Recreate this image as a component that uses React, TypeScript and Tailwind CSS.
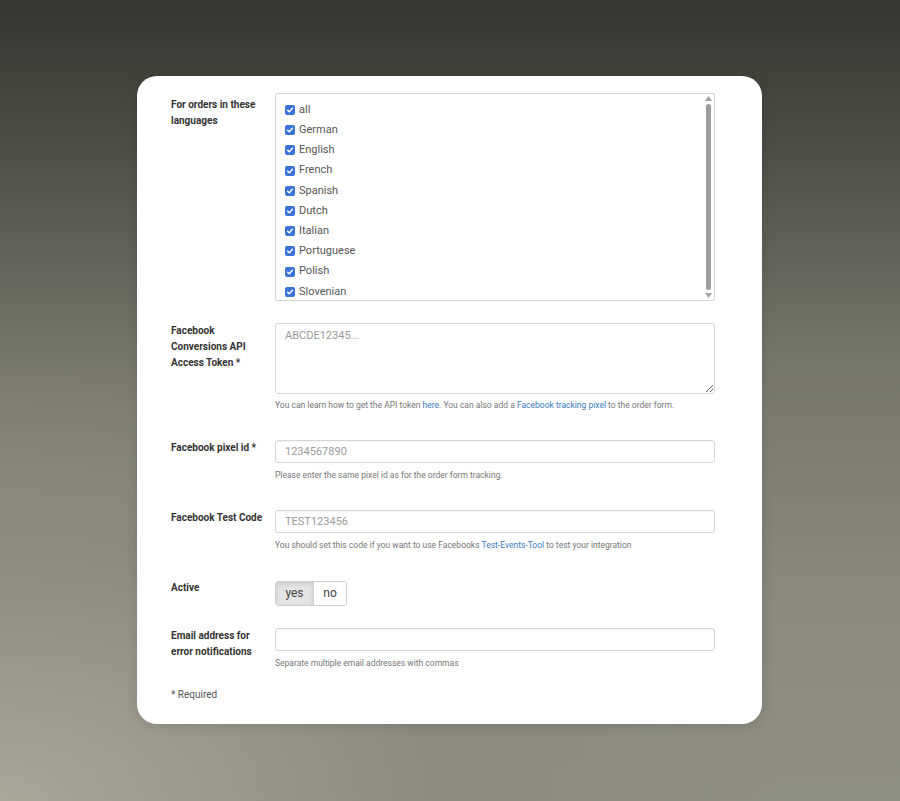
import type { ReactNode } from 'react'

const LANGUAGES = ['all', 'German', 'English', 'French', 'Spanish', 'Dutch', 'Italian', 'Portuguese', 'Polish', 'Slovenian']

function Check() {
  return (
    <span className="w-[10px] h-[10px] rounded-[2px] bg-[#3b74d9] flex items-center justify-center shrink-0">
      <svg className="w-[8px] h-[8px]" viewBox="0 0 10 10" fill="none" stroke="white" strokeWidth={1.8} strokeLinecap="round" strokeLinejoin="round">
        <path d="M2 5.2 4.1 7.3 8 2.8" />
      </svg>
    </span>
  )
}

function Row({ label, children, className = '', labelClass = '' }: { label: ReactNode; children: ReactNode; className?: string; labelClass?: string }) {
  return (
    <div className={`flex ${className}`}>
      <div className={`w-[104px] shrink-0 pr-2 text-[10px] font-bold leading-[16px] text-[#333] ${labelClass}`}>{label}</div>
      <div className="flex-1 min-w-0">{children}</div>
    </div>
  )
}

function Help({ children, className = 'mt-[5px]' }: { children: ReactNode; className?: string }) {
  return <p className={`${className} text-[8.5px] leading-[14px] text-[#777]`}>{children}</p>
}

const inputCls = 'block w-full h-[23px] border border-[#d6d6d6] rounded-[3px] px-[9px] text-[11px] text-[#555] placeholder:text-[#9a9a9a] outline-none shadow-[inset_0_1px_1px_rgba(0,0,0,0.04)]'

export default function App() {
  return (
    <div
      className="min-h-[801px] w-full flex pl-[137px] pt-[76px] bg-[radial-gradient(ellipse_110%_70%_at_0%_100%,#a8a697_0%,#8b8a7d_45%,transparent_80%),linear-gradient(180deg,#35342f_0%,#4e4d45_18%,#77766a_45%,#8a897c_75%,#8f8e82_100%)]"
      style={{ fontFamily: 'Roboto, "Liberation Sans", sans-serif' }}
    >
      <div className="w-[625px] h-[648px] bg-white rounded-[20px] pt-[17px] pl-[34px] pr-[47px] shadow-[0_2px_12px_rgba(0,0,0,0.12)]">
        <Row label="For orders in these languages" labelClass="pt-[4px]" className="mb-[22px]">
          <div className="flex h-[208px] border border-[#d4d4d4] rounded-[2px] overflow-hidden">
            <ul className="flex-1 pt-[6px] pl-[9px]">
              {LANGUAGES.map((l) => (
                <li key={l} className="h-[20.2px] flex items-center gap-[4px] text-[11px] text-[#555]">
                  <Check />
                  <span>{l}</span>
                </li>
              ))}
            </ul>
            <div className="w-[10px] mr-[1px] flex flex-col items-center pt-[2px] pb-[2px]">
              <svg className="w-[7px] h-[5px] shrink-0" viewBox="0 0 7 5"><path d="M3.5 0 7 5H0z" fill="#a3a3a3" /></svg>
              <div className="flex-1 w-[5px] rounded-full bg-[#9c9c9c] my-[3px]" />
              <svg className="w-[7px] h-[5px] shrink-0" viewBox="0 0 7 5"><path d="M0 0h7L3.5 5z" fill="#a3a3a3" /></svg>
            </div>
          </div>
        </Row>

        <Row label={<>Facebook<br />Conversions API<br />Access Token *</>} className="mb-[28px]">
          <textarea
            className="block w-full h-[71px] border border-[#d6d6d6] rounded-[3px] px-[9px] py-[5px] text-[11px] leading-[14px] text-[#555] placeholder:text-[#9a9a9a] outline-none"
            placeholder="ABCDE12345..."
          />
          <Help className="mt-[4px]">
            You can learn how to get the API token <a className="text-[#3a7bc0]">here</a>. You can also add a{' '}
            <a className="text-[#3a7bc0]">Facebook tracking pixel</a> to the order form.
          </Help>
        </Row>

        <Row label="Facebook pixel id *" className="mb-[28px]">
          <input className={inputCls} placeholder="1234567890" />
          <Help>Please enter the same pixel id as for the order form tracking.</Help>
        </Row>

        <Row label="Facebook Test Code" className="mb-[28px]">
          <input className={inputCls} placeholder="TEST123456" />
          <Help>
            You should set this code if you want to use Facebooks <a className="text-[#3a7bc0]">Test-Events-Tool</a> to test your integration
          </Help>
        </Row>

        <Row label="Active" className="mb-[22px]">
          <div className="inline-flex h-[25px] border border-[#cfcfcf] rounded-[3px] overflow-hidden text-[12px] text-[#444]">
            <span className="w-[38px] flex items-center justify-center bg-[#e4e4e4] border-r border-[#cfcfcf] shadow-[inset_0_2px_4px_rgba(0,0,0,0.12)]">yes</span>
            <span className="w-[32px] flex items-center justify-center bg-white">no</span>
          </div>
        </Row>

        <Row label={<>Email address for<br />error notifications</>} className="mb-[17px]">
          <input className={inputCls} />
          <Help>Separate multiple email addresses with commas</Help>
        </Row>

        <p className="text-[10px] leading-[16px] text-[#555]">* Required</p>
      </div>
    </div>
  )
}
